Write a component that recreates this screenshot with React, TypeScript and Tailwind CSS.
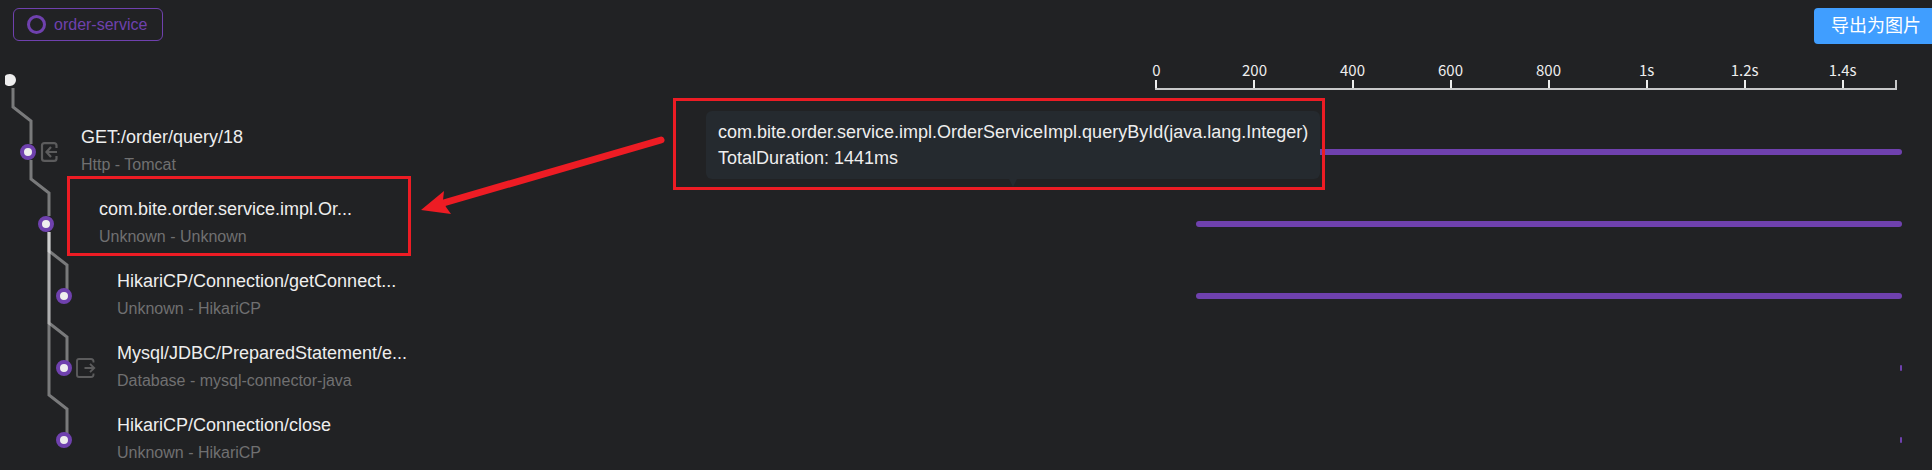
type Direction = "in" | "out"

interface Span {
  name: string
  kind: string
  depth: number
  start: number
  end: number
  direction?: Direction
}

// bar positions are a percentage of the timeline column
const spans: Span[] = [
  { name: "GET:/order/query/18", kind: "Http - Tomcat", depth: 0, start: 0, end: 100, direction: "in" },
  { name: "com.bite.order.service.impl.Or...", kind: "Unknown - Unknown", depth: 1, start: 5.3, end: 100 },
  { name: "HikariCP/Connection/getConnect...", kind: "Unknown - HikariCP", depth: 2, start: 5.3, end: 100 },
  {
    name: "Mysql/JDBC/PreparedStatement/e...",
    kind: "Database - mysql-connector-java",
    depth: 2,
    start: 99.75,
    end: 100,
    direction: "out",
  },
  { name: "HikariCP/Connection/close", kind: "Unknown - HikariCP", depth: 2, start: 99.75, end: 100 },
]

const ticks = ["0", "200", "400", "600", "800", "1s", "1.2s", "1.4s"]
const totalMs = 1513

const indent = ["pl-5", "pl-[38px]", "pl-14"]

const branches = [
  "M13 88V107L31 121V144",
  "M31 160V179L49 193V216",
  "M49 232V251L67 265V291",
  "M49 232V323L67 337V363",
  "M49 232V395L67 409V435",
]

function DirectionIcon({ direction }: { direction: Direction }) {
  if (direction === "in") {
    return (
      <svg viewBox="0 0 20 20" className="size-5" fill="none" stroke="#5c5c5d" strokeWidth="2.200">
        <path d="M16.500 6V3.500Q16.500 1.100 14 1.100H4.500Q2 1.100 2 3.500V16.500Q2 18.900 4.500 18.900H14Q16.500 18.900 16.500 16.500V14" />
        <path d="M17 10H6.500M11 5L6.500 10L11 15" />
      </svg>
    )
  }
  return (
    <svg viewBox="0 0 20 20" className="size-5" fill="none" stroke="#5c5c5d" strokeWidth="1.900">
      <path d="M17.500 4.500V3.500Q17.500 1 15 1H3Q1 1 1 3V17Q1 19 3 19H15Q17.500 19 17.500 16.500V15.500" />
      <path d="M8.500 10H18M14 5.800L18.200 10L14 14.200" />
    </svg>
  )
}

function TraceTree() {
  return (
    <svg className="pointer-events-none absolute left-0 top-0 h-[470px] w-20" viewBox="0 0 80 470" fill="none">
      <path d="M5 76Q6 74 10 74A6 6 0 0 1 10 86Q6 86 5 84Z" fill="#eeeeee" />
      {branches.map((d) => (
        <path key={d} d={d} stroke="#fff" strokeOpacity="0.4" strokeWidth="3" />
      ))}
    </svg>
  )
}

function SpanRow({ span }: { span: Span }) {
  return (
    <li className="flex h-[72px] shrink-0 items-center">
      <div className={`flex min-w-0 flex-1 items-center ${indent[span.depth]}`}>
        <span className="relative size-4 shrink-0 rounded-full border-4 border-[#6f41ae] bg-[#eeeeee]" />
        <span className="w-[45px] shrink-0 pl-1">
          {span.direction && <DirectionIcon direction={span.direction} />}
        </span>
        <div className="whitespace-nowrap pb-0.5 leading-[27px]">
          <div className="text-[18px] text-[#eeeeee]">{span.name}</div>
          <div className="text-[16px] text-[#707071]">{span.kind}</div>
        </div>
      </div>
      <div className="w-[39.2%]">
        <div
          className="h-1.5 rounded-full bg-[#6f41ae]"
          style={{ marginLeft: `${span.start}%`, width: `${span.end - span.start}%` }}
        />
      </div>
    </li>
  )
}

function TimeAxis() {
  return (
    <div className="mt-4 flex justify-end pr-[30px]">
      <div className="w-[39.25%] pr-[5px]">
        <div className="flex h-[30px] flex-row border-b-2 border-[#c8c9ca] font-['Noto_Sans_CJK_SC',sans-serif] text-[15px] leading-5 text-[#eeeeee]">
          {ticks.map((tick, i) => (
            <div
              key={tick}
              className="flex shrink-0 flex-col"
              style={{ width: `${((i < ticks.length - 1 ? 200 : totalMs - 1400) / totalMs) * 100}%` }}
            >
              <div className="flex h-5 w-0.5 justify-center whitespace-nowrap">
                <span className="shrink-0">{tick}</span>
              </div>
              <div className="h-2 w-0.5 bg-[#eeeeee]" />
            </div>
          ))}
          <div className="-ml-0.5 h-2 w-0.5 shrink-0 self-end bg-[#c8c9ca]" />
        </div>
      </div>
    </div>
  )
}

function Tooltip() {
  return (
    <div
      role="tooltip"
      className="absolute left-[706px] top-[111px] whitespace-nowrap rounded-md bg-[#252a2f] px-3 py-2 text-[18px] leading-[26px] text-[#eeeeee]"
    >
      <div>com.bite.order.service.impl.OrderServiceImpl.queryById(java.lang.Integer)</div>
      <div>TotalDuration: 1441ms</div>
      <svg viewBox="0 0 8 8" className="absolute left-1/2 top-full size-2 -translate-x-1/2" fill="#252a2f">
        <path d="M0 0H8L4 8Z" />
      </svg>
    </div>
  )
}

function Annotations() {
  return (
    <>
      <div className="absolute left-[67px] top-[176px] h-20 w-[344px] border-3 border-[#ed1c24]" />
      <div className="absolute left-[673px] top-[98px] h-[92px] w-[652px] border-3 border-[#ed1c24]" />
      <svg viewBox="0 0 250 84" className="absolute left-[418px] top-[133px] h-[84px] w-[250px]">
        <path d="M243 7L22 71" stroke="#ed1c24" strokeWidth="7" strokeLinecap="round" />
        <path d="M3 77L26 58L25 67L28 74L33 81Z" fill="#ed1c24" />
      </svg>
    </>
  )
}

export default function App() {
  return (
    <main className="relative flex h-screen flex-col overflow-hidden bg-[#212224] font-['Liberation_Sans',Arial,sans-serif]">
      <header className="flex shrink-0 items-start justify-between pl-[13px] pt-2">
        <div className="flex h-[33px] items-center rounded-md border border-[#6f41ae] pl-[13px] pr-[15px] text-[#6f41ae]">
          <span className="mr-2 size-[19px] rounded-full border-3 border-[#6f41ae]" />
          <span className="text-[16px] leading-5">order-service</span>
        </div>
        <button
          type="button"
          className="h-9 cursor-pointer rounded-l bg-[#409eff] pl-[17px] pr-[11px] font-['Liberation_Sans','Noto_Sans_CJK_SC',sans-serif] text-[18px] leading-5 text-white"
        >
          导出为图片
        </button>
      </header>

      <TimeAxis />

      <TraceTree />
      <ul className="mt-[26px] pr-[30px]">
        {spans.map((span) => (
          <SpanRow key={span.name} span={span} />
        ))}
      </ul>

      <Tooltip />
      <Annotations />
    </main>
  )
}
